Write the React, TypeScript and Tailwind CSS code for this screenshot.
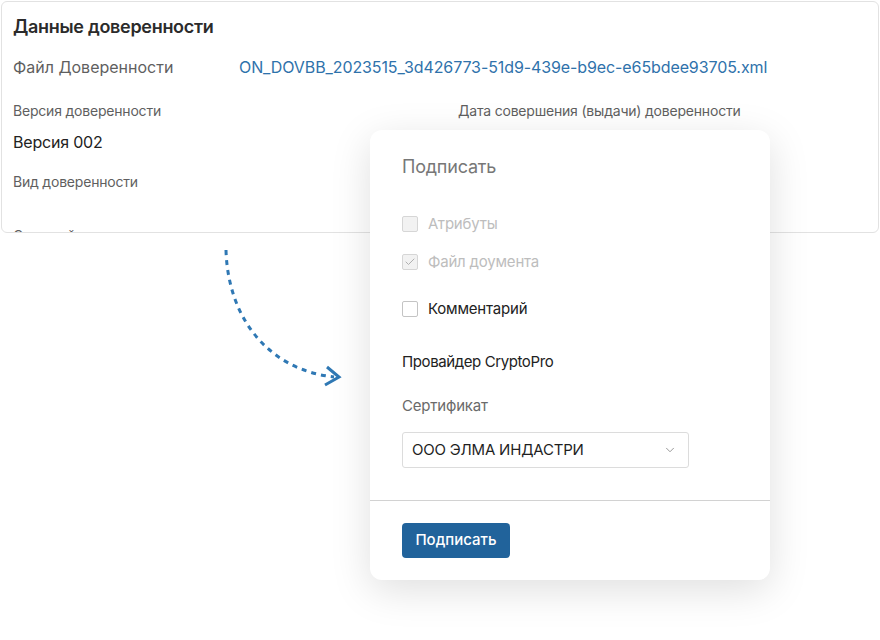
import { ChevronDown, Check } from 'lucide-react';

const FONT = { fontFamily: 'Inter, "Noto Sans", sans-serif' };

function Checkbox({ label, checked, disabled }: { label: string; checked?: boolean; disabled?: boolean }) {
  return (
    <label className="flex items-center gap-[10px] h-6">
      <span
        className={`w-4 h-4 rounded-[2px] border flex items-center justify-center ${
          disabled ? 'bg-[#f2f2f2] border-[#d6d6d6]' : 'bg-white border-[#c4c4c4]'
        }`}
      >
        {checked && <Check size={12} strokeWidth={2} className="text-[#b0b0b0]" />}
      </span>
      <span className={`text-[15px] tracking-[-0.2px] ${disabled ? 'text-[#bdbdbd]' : 'text-[#222]'}`}>{label}</span>
    </label>
  );
}

export default function App() {
  return (
    <div className="relative w-[880px] h-[640px] bg-white overflow-hidden" style={FONT}>
      {/* Power of attorney card */}
      <div className="m-[1px] h-[232px] border border-[#e2e2e2] rounded-md bg-white px-[11px] pt-[11px] overflow-hidden">
        <h2 className="text-[18px] leading-7 font-semibold text-[#2b2b2b] tracking-[-0.3px]">Данные доверенности</h2>
        <div className="mt-[14px] flex h-6 items-center text-[16px]">
          <span className="w-[226px] text-[#5f5f5f]">Файл Доверенности</span>
          <a className="text-[#2f72ab] tracking-[-0.1px]">ON_DOVBB_2023515_3d426773-51d9-439e-b9ec-e65bdee93705.xml</a>
        </div>
        <div className="grid grid-cols-[445px_1fr] mt-[22px]">
          <div>
            <div className="text-[14px] leading-5 text-[#5f5f5f] tracking-[-0.2px]">Версия доверенности</div>
            <div className="mt-[9px] text-[16px] leading-6 text-[#222] tracking-[-0.2px]">Версия 002</div>
            <div className="mt-[18px] text-[14px] leading-5 text-[#5f5f5f] tracking-[-0.2px]">Вид доверенности</div>
            <div className="mt-[34px] text-[14px] leading-5 text-[#5f5f5f] tracking-[-0.2px]">Срок действия</div>
          </div>
          <div>
            <div className="text-[14px] leading-5 text-[#5f5f5f] tracking-[-0.2px]">Дата совершения (выдачи) доверенности</div>
          </div>
        </div>
      </div>

      {/* Dotted arrow */}
      <svg className="absolute left-0 top-0 pointer-events-none" width="880" height="640">
        <path
          d="M226 250 C 228 320, 270 370, 334 377"
          fill="none"
          stroke="#2f78b4"
          strokeWidth="3"
          strokeDasharray="5 5"
        />
        <path d="M327 367 L339 377 L325 385" fill="none" stroke="#2f78b4" strokeWidth="3" strokeLinejoin="miter" />
      </svg>

      {/* Sign dialog */}
      <div className="absolute left-[370px] top-[130px] w-[400px] h-[450px] bg-white rounded-xl shadow-[0_10px_40px_rgba(0,0,0,0.13)]">
        <div className="px-8 pt-[23px]">
          <h3 className="text-[18px] leading-7 text-[#777] tracking-[-0.2px]">Подписать</h3>
          <div className="mt-[31px]">
            <Checkbox label="Атрибуты" disabled />
          </div>
          <div className="mt-[14px]">
            <Checkbox label="Файл доумента" checked disabled />
          </div>
          <div className="mt-[23px]">
            <Checkbox label="Комментарий" />
          </div>
          <div className="mt-[29px] text-[15px] leading-6 text-[#222] tracking-[-0.4px]">Провайдер CryptoPro</div>
          <div className="mt-[20px] text-[15px] leading-6 text-[#6a6a6a] tracking-[-0.2px]">Сертификат</div>
          <button className="mt-[14px] w-[287px] h-9 border border-[#dcdcdc] rounded-[3px] flex items-center justify-between pl-[9px] pr-[11px] text-[15px] text-[#1f1f1f] tracking-[-0.2px]">
            <span>ООО ЭЛМА ИНДАСТРИ</span>
            <ChevronDown size={14} strokeWidth={1.5} className="text-[#8a8a8a]" />
          </button>
        </div>
        <div className="mt-8 border-t border-[#d2d2d2]" />
        <div className="px-8 pt-[22px]">
          <button className="h-[35px] w-[108px] rounded bg-[#21639b] text-white text-[15px] font-medium">Подписать</button>
        </div>
      </div>
    </div>
  );
}
